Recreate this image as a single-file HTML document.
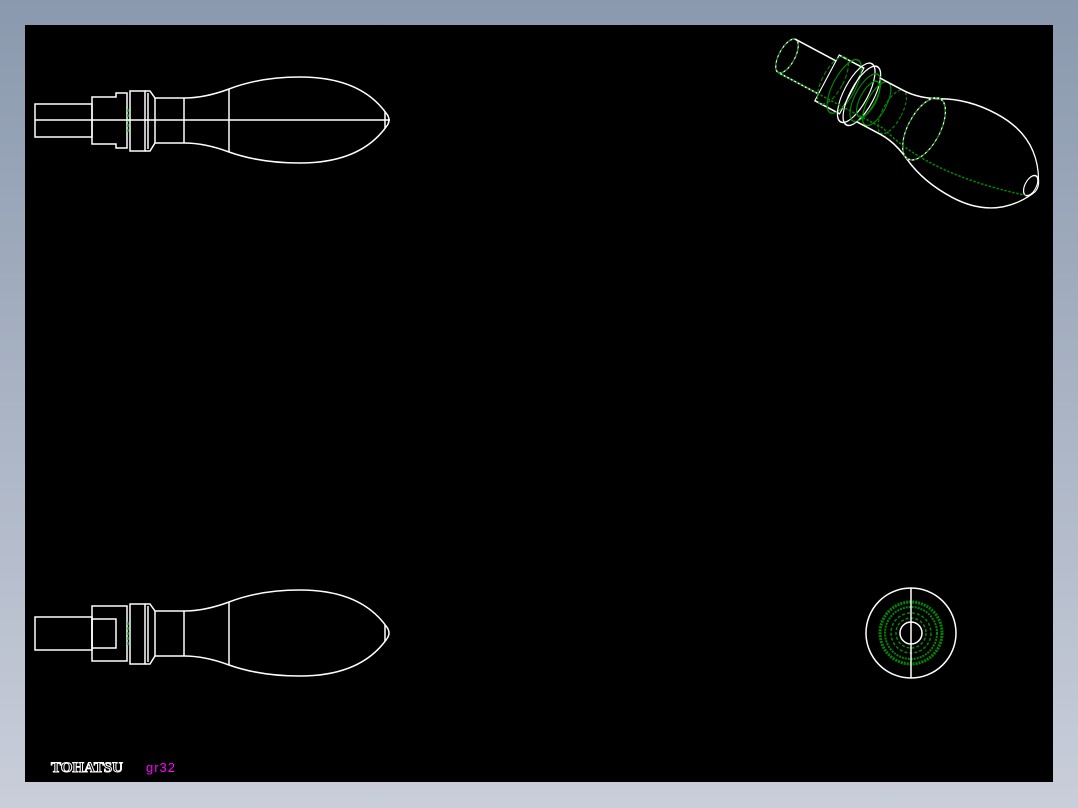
<!DOCTYPE html>
<html><head><style>
html,body{margin:0;padding:0}
body{width:1078px;height:808px;background:linear-gradient(#8a99ae,#c9ceda);position:relative;overflow:hidden;font-family:"Liberation Sans",sans-serif}
#c{position:absolute;left:25px;top:25px;width:1028px;height:757px;background:#000}
svg{position:absolute;left:0;top:0}
.t{position:absolute;left:51px;top:760px;font-family:"Liberation Serif",serif;font-weight:bold;font-size:15px;color:#000;-webkit-text-stroke:1px #fff}
.g{position:absolute;left:146px;top:760px;color:#f0f;font-size:13px;letter-spacing:1px}
</style></head><body>
<div id="c"></div>
<svg width="1078" height="808" fill="none" stroke="#fff" stroke-width="1.5">
<defs>
<g id="bulb">
<path d="M145 91 L150 91 L155 98 L184 98 Q205 98 229 89 Q260 77 300 77 Q360 77 386 113 Q392 120 386 127 Q360 163 300 163 Q260 163 229 152 Q205 143 184 143 L155 143 L150 151 L145 151"/>
<rect x="130" y="91" width="15" height="60"/>
<line x1="148" y1="93" x2="148" y2="149"/>
<line x1="155" y1="98" x2="155" y2="143"/>
<line x1="184" y1="98" x2="184" y2="143"/>
<line x1="229" y1="89" x2="229" y2="152"/>
<line x1="385" y1="112" x2="385" y2="128"/>
<line x1="128" y1="109" x2="128" y2="133" stroke="#0a0" stroke-dasharray="3 2"/>
</g>
</defs>
<rect x="35" y="104" width="57" height="33"/>
<path d="M92 97 H116 V93 H127 V148 H116 V144 H92 Z"/>
<use href="#bulb"/>
<line x1="35" y1="120" x2="390" y2="120"/>
<g transform="translate(0,513)">
<rect x="35" y="104" width="57" height="33"/>
<rect x="92" y="93" width="35" height="55"/>
<rect x="92" y="106" width="24" height="29"/>
<use href="#bulb"/>
</g>
<g transform="translate(787,56) rotate(28) scale(0.8,1.1) translate(-35,-120)" stroke-width="1.4">
<ellipse cx="35" cy="120" rx="10" ry="17"/>
<ellipse cx="35" cy="120" rx="10" ry="17" stroke="#080" stroke-dasharray="3 2"/>
<line x1="35" y1="103" x2="92" y2="103"/><line x1="35" y1="137" x2="92" y2="137"/>
<path d="M92 97 H127 V144 H92 Z"/>
<ellipse cx="100" cy="120" rx="13" ry="24" stroke="#080" stroke-dasharray="4 2"/>
<ellipse cx="116" cy="120" rx="14" ry="27" stroke="#080"/>
<ellipse cx="133" cy="120" rx="15" ry="30"/>
<ellipse cx="141" cy="120" rx="15" ry="30"/>
<ellipse cx="146" cy="120" rx="13" ry="24" stroke="#080"/>
<ellipse cx="150" cy="120" rx="10" ry="18" stroke="#080"/>
<ellipse cx="162" cy="120" rx="12" ry="22" stroke="#080"/>
<ellipse cx="184" cy="120" rx="12" ry="22" stroke="#080" stroke-dasharray="3 2"/>
<path d="M150 98 L184 98 Q205 98 229 89 Q260 77 300 77 Q360 77 386 113 Q392 120 386 127 Q360 163 300 163 Q260 163 229 152 Q205 143 184 143 L150 143"/>
<ellipse cx="229" cy="120" rx="20" ry="31"/>
<ellipse cx="229" cy="120" rx="20" ry="31" stroke="#080" stroke-dasharray="3 2"/>
<ellipse cx="380" cy="120" rx="7" ry="10"/>
<path d="M35 137 L184 137 Q260 155 380 130" stroke="#080" stroke-dasharray="3 2"/>
</g>
<circle cx="911" cy="633" r="45"/>
<circle cx="911" cy="633" r="31" stroke="#080" stroke-width="3" stroke-dasharray="2 1"/>
<circle cx="911" cy="633" r="26" stroke="#080" stroke-width="2" stroke-dasharray="2 1"/>
<circle cx="911" cy="633" r="20" stroke="#080" stroke-dasharray="3 2"/>
<circle cx="911" cy="633" r="15" stroke="#080" stroke-dasharray="3 2"/>
<circle cx="911" cy="633" r="11"/>
<line x1="911" y1="588" x2="911" y2="678"/>
</svg>
<div class="t">TOHATSU</div>
<div class="g">gr32</div>
</body></html>
